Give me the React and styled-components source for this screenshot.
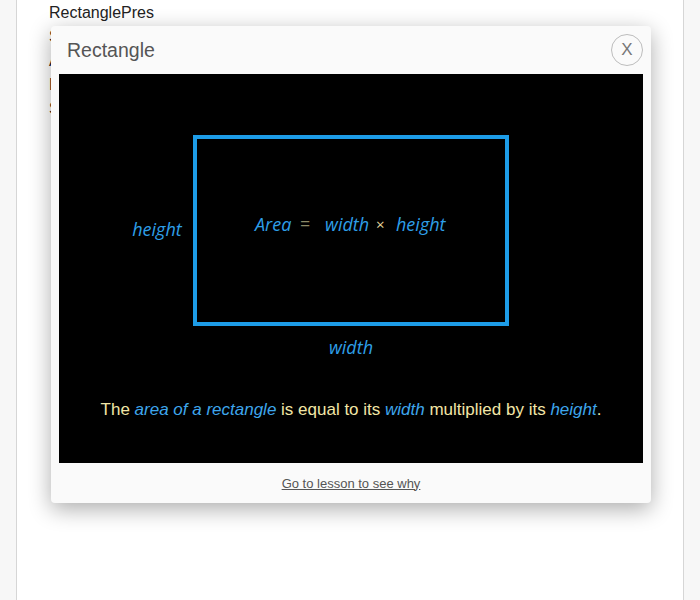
import React from "react";
import styled, { createGlobalStyle } from "styled-components";

const Global = createGlobalStyle`
  html, body { margin: 0; padding: 0; background: #f7f7f7; }
  body { font-family: "Liberation Sans", Arial, sans-serif; }
`;

const Page = styled.div`
  position: relative;
  margin: 0 16px;
  min-height: 600px;
  background: #fff;
  border-left: 1px solid #d6d6d6;
  border-right: 1px solid #d6d6d6;
  padding: 1px 32px 0;
  box-sizing: border-box;
`;

const PageLine = styled.div`
  font-size: 16px;
  line-height: 24px;
  color: #222;
`;

const Dialog = styled.div`
  position: absolute;
  left: 34px;
  top: 26px;
  width: 600px;
  background: #fafafa;
  border-radius: 4px;
  box-shadow: 0 6px 22px rgba(0, 0, 0, 0.33);
  display: flex;
  flex-direction: column;
`;

const Header = styled.div`
  height: 48px;
  display: flex;
  align-items: center;
  justify-content: space-between;
  padding: 0 8px 0 16px;
`;

const Title = styled.h2`
  margin: 0;
  font-weight: normal;
  font-size: 19.5px;
  color: #555;
`;

const Close = styled.button`
  width: 32px;
  height: 32px;
  border-radius: 50%;
  border: 1px solid #bdbdbd;
  background: transparent;
  color: #777;
  font-family: "Liberation Sans", Arial, sans-serif;
  font-size: 17px;
  padding: 0;
  display: flex;
  align-items: center;
  justify-content: center;
`;

const Figure = styled.div`
  margin: 0 8px;
  height: 389px;
  background: #000;
  display: flex;
  flex-direction: column;
  align-items: center;
`;

const Caption = styled.p`
  margin: 6px 0 0;
  font-size: 17px;
  line-height: 20px;
  color: #f2e6a6;
`;

const Term = styled.em`
  color: #3ea6ec;
`;

const Footer = styled.div`
  height: 40px;
  display: flex;
  align-items: center;
  justify-content: center;
`;

const Link = styled.a`
  font-size: 13px;
  color: #555;
  text-decoration: underline;
`;

const labelFont = `"Open Sans", "DejaVu Sans", sans-serif`;

function Diagram() {
  const t = { fontFamily: labelFont, fontStyle: "italic", fontSize: 18, fill: "#2e9fe8" };
  return (
    <svg width="584" height="320" viewBox="0 0 584 320">
      <rect x="136" y="63" width="312" height="187" fill="none" stroke="#1d9ce7" strokeWidth="4" />
      <text {...t} x="98" y="162" textAnchor="middle">height</text>
      <text {...t} x="292" y="280" textAnchor="middle">width</text>
      <text {...t} x="196" y="157">Area</text>
      <text x="241" y="156" fontFamily={labelFont} fontSize="18" fill="#8c8966">=</text>
      <text {...t} x="266" y="157">width</text>
      <text x="317" y="156" fontFamily={labelFont} fontSize="15" fill="#e3d69c">×</text>
      <text {...t} x="337" y="157">height</text>
    </svg>
  );
}

export default function App() {
  return (
    <>
      <Global />
      <Page>
        <PageLine>RectanglePres</PageLine>
        <PageLine>Shape</PageLine>
        <PageLine>Area</PageLine>
        <PageLine>Length</PageLine>
        <PageLine>Size</PageLine>
        <Dialog>
          <Header>
            <Title>Rectangle</Title>
            <Close>X</Close>
          </Header>
          <Figure>
            <Diagram />
            <Caption>
              The <Term>area of a rectangle</Term> is equal to its <Term>width</Term> multiplied by its <Term>height</Term>.
            </Caption>
          </Figure>
          <Footer>
            <Link href="#">Go to lesson to see why</Link>
          </Footer>
        </Dialog>
      </Page>
    </>
  );
}
